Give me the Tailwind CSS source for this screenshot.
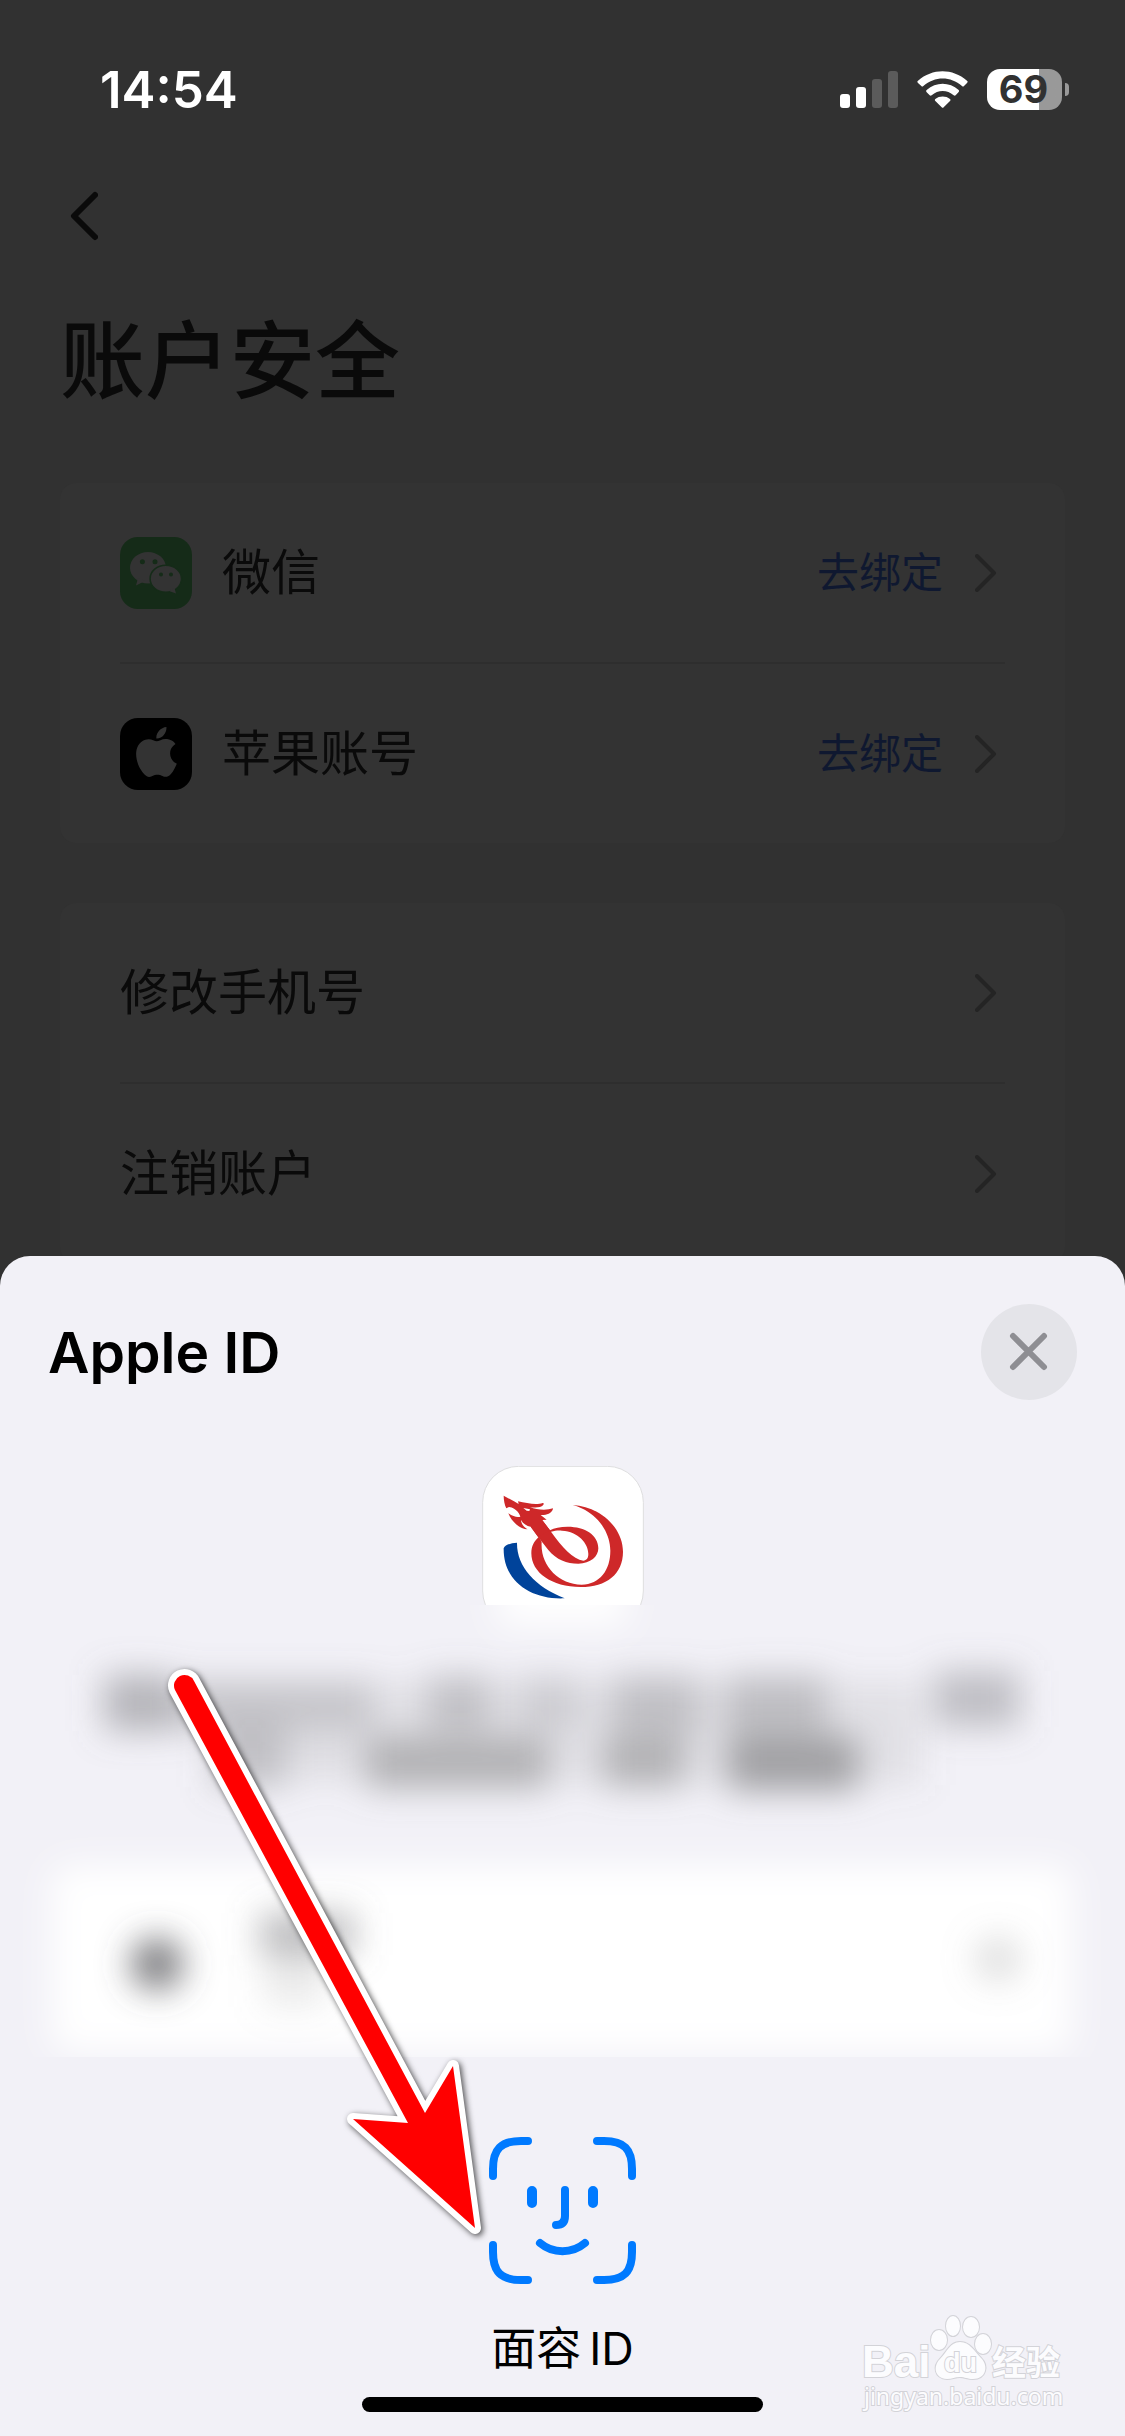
<!DOCTYPE html>
<html lang="zh-CN">
<head>
    <meta charset="UTF-8">
    <meta name="viewport" content="width=device-width, initial-scale=1.0">
    <title>账户安全</title>
    <script src="https://cdn.jsdelivr.net/npm/@tailwindcss/browser@4"></script>
</head>
<body class="bg-[#313131] min-h-screen overflow-hidden font-[Inter,'Noto_Sans_CJK_SC',sans-serif]">
    <!-- Status bar -->
    <header class="h-[178px] pl-[100px] pr-14 flex items-center justify-between text-white">
        <time class="text-[51px] leading-none font-semibold">14:54</time>
        <div class="flex items-center">
            <div class="flex items-end gap-[6px] h-[37px]">
                <span class="w-[10px] h-[14px] rounded-[3px] bg-white"></span>
                <span class="w-[10px] h-[21px] rounded-[3px] bg-white"></span>
                <span class="w-[10px] h-[29px] rounded-[3px] bg-[#5b5b5b]"></span>
                <span class="w-[10px] h-[37px] rounded-[3px] bg-[#5b5b5b]"></span>
            </div>
            <svg class="ml-[19px] w-[51px] h-[37px]" viewBox="0 0 151 111" fill="currentColor" aria-hidden="true">
                <path d="M2 29C45-9 106-9 149 29Q153 32 149 36L140 45Q137 48 134 45C100 15 52 15 18 45Q15 48 12 45L2 36Q-2 32 2 29Z"/>
                <path d="M28 57C56 32 96 32 124 57Q127 60 124 63L115 73Q112 75 109 73C90 56 62 56 43 73Q40 75 37 73L28 64Q24 60 28 57Z"/>
                <path d="M54 84C66 74 86 74 98 84Q101 87 98 90L79 109Q76 112 73 109L54 90Q51 87 54 84Z"/>
            </svg>
            <div class="ml-[19px] w-[75px] h-[41px] pr-[2px] rounded-[13px] bg-linear-to-r from-white from-69% to-[#999] to-69% flex items-center justify-center text-[38px] leading-none font-bold text-[#313131]">69</div>
            <span class="ml-[3px] w-1 h-[13px] rounded-r-full bg-[#999]"></span>
        </div>
    </header>

    <main class="px-[60px] text-[#0a0a0a]">
        <button class="h-[76px] w-[76px] pl-[10px] flex items-center" aria-label="返回">
            <svg class="w-7 h-[50px]" viewBox="0 0 28 50" fill="none" stroke="currentColor" stroke-width="6" stroke-linecap="round" stroke-linejoin="round"><path d="M25 4L4 25L25 46"/></svg>
        </button>
        <h1 class="mt-[58px] text-[85px] leading-[100px] font-medium">账户安全</h1>

        <ul class="mt-[71px] px-[60px] rounded-2xl bg-[#333] divide-y-2 divide-[#2e2e2e] text-[49px]">
            <li>
                <a href="#" class="h-[179px] flex items-center">
                    <svg class="w-[72px] h-[72px]" viewBox="0 0 72 72" aria-hidden="true">
                        <rect width="72" height="72" rx="18" fill="#152b18"/>
                        <g fill="#333">
                            <ellipse cx="28" cy="30.700" rx="18" ry="15.700"/>
                            <path d="M18 41L16 48.500L25 44Z"/>
                            <ellipse cx="45.800" cy="41.700" rx="15.700" ry="13.500" stroke="#152b18" stroke-width="1.500"/>
                            <path d="M49 54L56 56.500L54.500 51Z"/>
                        </g>
                        <g fill="#152b18">
                            <circle cx="22.400" cy="24.700" r="2.500"/>
                            <circle cx="35" cy="24.700" r="2.500"/>
                            <circle cx="41" cy="37.500" r="2"/>
                            <circle cx="51" cy="37.500" r="2"/>
                        </g>
                    </svg>
                    <span class="ml-[30px]">微信</span>
                    <span class="ml-auto text-[42px] text-[#0f1830]">去绑定</span>
                    <svg class="ml-8 mr-2 w-[22px] h-10" viewBox="0 0 22 40" fill="none" stroke="#242424" stroke-width="4" stroke-linecap="round" stroke-linejoin="round"><path d="M2 3L19 20L2 37"/></svg>
                </a>
            </li>
            <li>
                <a href="#" class="h-[179px] flex items-center">
                    <svg class="w-[72px] h-[72px]" viewBox="0 0 72 72" aria-hidden="true">
                        <rect width="72" height="72" rx="18" fill="#000"/>
                        <path transform="translate(11.500 9) scale(2.080)" fill="#333" d="M12.152 6.896c-.948 0-2.415-1.078-3.96-1.04-2.04.027-3.91 1.183-4.961 3.014-2.117 3.675-.546 9.103 1.519 12.09 1.013 1.454 2.208 3.09 3.792 3.039 1.52-.065 2.09-.987 3.935-.987 1.831 0 2.35.987 3.96.948 1.637-.026 2.676-1.48 3.676-2.948 1.156-1.688 1.636-3.325 1.662-3.415-.039-.013-3.182-1.221-3.22-4.857-.026-3.04 2.48-4.494 2.597-4.559-1.429-2.09-3.623-2.324-4.39-2.376-2-.156-3.675 1.09-4.61 1.09zM15.53 3.83c.843-1.012 1.4-2.427 1.245-3.83-1.207.052-2.662.805-3.532 1.818-.78.896-1.454 2.338-1.273 3.714 1.338.104 2.715-.688 3.559-1.701"/>
                    </svg>
                    <span class="ml-[30px]">苹果账号</span>
                    <span class="ml-auto text-[42px] text-[#0f1830]">去绑定</span>
                    <svg class="ml-8 mr-2 w-[22px] h-10" viewBox="0 0 22 40" fill="none" stroke="#242424" stroke-width="4" stroke-linecap="round" stroke-linejoin="round"><path d="M2 3L19 20L2 37"/></svg>
                </a>
            </li>
        </ul>

        <ul class="mt-[60px] px-[60px] rounded-2xl bg-[#333] divide-y-2 divide-[#2e2e2e] text-[49px]">
            <li>
                <a href="#" class="h-[179px] flex items-center justify-between">
                    修改手机号
                    <svg class="mr-2 w-[22px] h-10" viewBox="0 0 22 40" fill="none" stroke="#242424" stroke-width="4" stroke-linecap="round" stroke-linejoin="round"><path d="M2 3L19 20L2 37"/></svg>
                </a>
            </li>
            <li>
                <a href="#" class="h-[179px] flex items-center justify-between">
                    注销账户
                    <svg class="mr-2 w-[22px] h-10" viewBox="0 0 22 40" fill="none" stroke="#242424" stroke-width="4" stroke-linecap="round" stroke-linejoin="round"><path d="M2 3L19 20L2 37"/></svg>
                </a>
            </li>
        </ul>
    </main>

    <!-- Apple ID sheet -->
    <section role="dialog" aria-labelledby="sheetTitle" class="fixed inset-x-0 bottom-0 pt-12 pb-6 rounded-t-[30px] bg-[#f2f1f7] text-black flex flex-col items-center">
        <div class="w-full px-12 flex items-center justify-between">
            <h2 id="sheetTitle" class="text-[57px] leading-none font-semibold">Apple ID</h2>
            <button class="w-24 h-24 rounded-full bg-[#e4e4e9] flex items-center justify-center" aria-label="关闭">
                <svg class="w-10 h-10" viewBox="0 0 40 40" fill="none" stroke="#8e8e93" stroke-width="6" stroke-linecap="round"><path d="M4 4L35 35M35 4L4 35"/></svg>
            </button>
        </div>

        <!-- App icon -->
        <svg class="mt-[66px] w-[162px] h-[139px]" viewBox="126 78 486 417" aria-hidden="true">
            <rect x="128" y="79" width="482" height="482" rx="108" fill="#fff" stroke="#dededf" stroke-width="3"/>
            <g fill="#ce2829">
                <path d="M398 195C480 200 549 262 549 335C549 402 500 441 422 441C335 441 274 398 274 340C274 318 282 303 297 290L305 306C300 375 355 433 425 434C480 432 511 390 511 332C511 275 470 215 398 195Z"/>
                <path fill-rule="evenodd" d="M272 260L295 292L325 330C350 360 380 371 415 371C452 370 475 350 475 325C475 285 435 260 383 260C360 260 343 264 330 271L303 235ZM333 275C345 272 354 271 366 272C415 275 445 310 445 342C445 355 440 361 430 362C400 358 365 320 333 275Z"/>
                <path fill-rule="evenodd" d="M191 167L222 184L236 192L234 184C260 190 290 196 308 189C312 188 312 192 309 196C303 203 285 204 270 201C290 210 320 212 339 205C338 218 322 226 302 225L320 239L306 240L330 271L295 292L272 260C260 258 250 252 243 240C243 250 252 262 263 268C240 268 215 246 205 220C220 230 232 233 241 230C238 218 225 203 207 201L199 205C194 195 191 180 191 167ZM250 204L270 208L268 213L260 212Z"/>
            </g>
            <path fill="#00439a" d="M191 325C195 315 212 309 231 308C230 380 285 440 374 475C280 480 190 430 191 325Z"/>
        </svg>

        <!-- Blurred account details -->
        <svg class="w-full" viewBox="0 0 1125 452" aria-hidden="true">
            <defs>
                <filter id="soft" x="-30%" y="-100%" width="160%" height="300%"><feGaussianBlur stdDeviation="17"/></filter>
            </defs>
            <rect x="498" y="-30" width="128" height="50" fill="#fff" filter="url(#soft)"/>
            <g fill="#77777b" filter="url(#soft)">
                <rect x="104" y="70" width="66" height="56" fill-opacity=".5"/>
                <rect x="166" y="76" width="206" height="48" fill-opacity=".36"/>
                <rect x="372" y="76" width="550" height="104" fill-opacity=".14"/>
                <rect x="428" y="70" width="62" height="54" fill-opacity=".3"/>
                <rect x="520" y="70" width="60" height="54" fill-opacity=".2"/>
                <rect x="612" y="70" width="88" height="60" fill-opacity=".3"/>
                <rect x="726" y="70" width="100" height="60" fill-opacity=".34"/>
                <rect x="934" y="66" width="86" height="56" fill-opacity=".42"/>
                <rect x="214" y="120" width="72" height="62" fill-opacity=".4"/>
                <rect x="286" y="120" width="86" height="56" fill-opacity=".15"/>
                <rect x="366" y="132" width="182" height="52" fill-opacity=".46"/>
                <rect x="604" y="132" width="80" height="50" fill-opacity=".46"/>
                <rect x="728" y="132" width="130" height="54" fill-opacity=".62"/>
            </g>
            <rect x="52" y="261" width="1020" height="186" rx="20" fill="#fff" filter="url(#soft)"/>
            <g filter="url(#soft)">
                <circle cx="157" cy="359" r="26" fill="#55555b" fill-opacity=".8"/>
                <rect x="260" y="308" width="94" height="42" fill="#77777b" fill-opacity=".5"/>
                <rect x="264" y="350" width="60" height="52" fill="#999" fill-opacity=".2"/>
                <circle cx="998" cy="354" r="23" fill="#999" fill-opacity=".32"/>
            </g>
        </svg>

        <button class="mt-20 flex flex-col items-center">
            <svg class="w-[147px] h-[147px]" viewBox="0 0 147 147" fill="none" stroke="#007aff" stroke-width="8" stroke-linecap="round" stroke-linejoin="round" aria-hidden="true">
                <path d="M4 39V32C4 12 12 4 32 4H39M108 4H115C135 4 143 12 143 32V39M143 108V115C143 135 135 143 115 143H108M39 143H32C12 143 4 135 4 115V108"/>
                <path stroke-width="10" d="M43 54V66M104 54V66"/>
                <path d="M76 53V79C76 85 73 88 67 88M51 106C64 117 83 117 96 106"/>
            </svg>
            <span class="mt-[35px] flex gap-2 text-[45px] leading-[60px]"><span>面容</span><span>ID</span></span>
        </button>
        <div class="mt-[18px] w-[401px] h-[15px] rounded-full bg-black"></div>

        <!-- Pointer arrow laid over the sheet -->
        <svg class="absolute left-[150px] top-[400px] w-[350px] h-[600px] drop-shadow-[2px_2px_3px_rgba(0,0,0,0.7)]" viewBox="150 1656 350 600" aria-hidden="true">
            <path fill="#f00" stroke="#fff" stroke-width="12" stroke-linejoin="round" paint-order="stroke" d="M175 1690A10 10 0 0 1 194 1681L425 2113L453 2066L475 2228L353 2119L408 2123Z"/>
        </svg>

        <!-- Watermark -->
        <svg class="absolute right-[57px] bottom-[22px] w-[210px] h-[104px]" viewBox="858 2310 210 104" fill="#fcfcfe" stroke="#d3d3d8" stroke-width="2" paint-order="stroke">
            <ellipse cx="939" cy="2340" rx="8" ry="10"/>
            <ellipse cx="953" cy="2326" rx="7" ry="10"/>
            <ellipse cx="971" cy="2327" rx="8" ry="10"/>
            <ellipse cx="983" cy="2344" rx="8" ry="10"/>
            <path d="M960 2342C970 2342 974 2351 981 2358C989 2366 986 2379 973 2379C967 2379 965 2377 960 2377C955 2377 952 2379 947 2379C934 2378 933 2366 940 2359C947 2352 950 2342 960 2342Z"/>
            <text x="862" y="2377" font-size="44" font-weight="700" font-family="Liberation Sans, sans-serif">Bai</text>
            <text x="944" y="2372" font-size="27" font-weight="700" font-family="Liberation Sans, sans-serif">du</text>
            <text x="992" y="2375" font-size="34" font-weight="700" font-family="Noto Sans CJK SC, sans-serif">经验</text>
            <text x="864" y="2405" font-size="23" font-family="Noto Sans, sans-serif">jingyan.baidu.com</text>
        </svg>
    </section>
</body>
</html>
